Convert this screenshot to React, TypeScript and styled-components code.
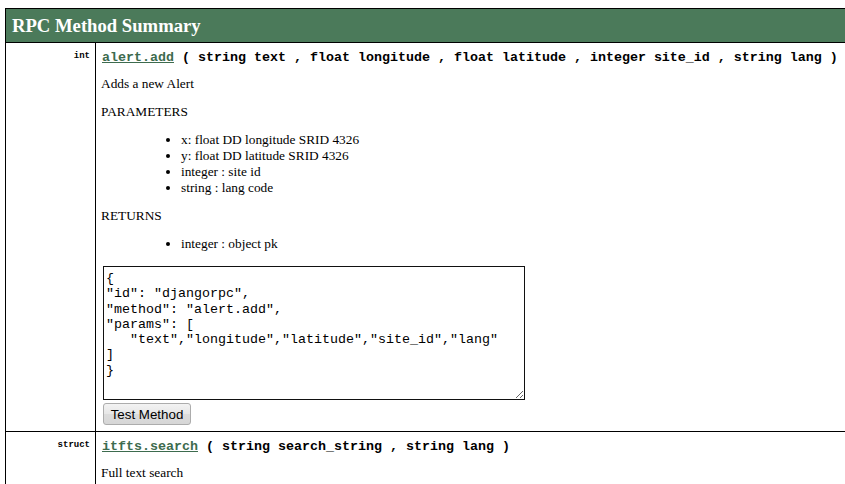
import React from "react";
import styled, { createGlobalStyle } from "styled-components";

const GlobalStyle = createGlobalStyle`
  html, body {
    margin: 0;
    padding: 0;
    overflow: hidden;
    background: #ffffff;
  }
  body {
    padding: 8px 0 0 5px;
    font-family: "Liberation Serif", "Times New Roman", serif;
    font-size: 13.33px;
    color: #000;
  }
`;

const Table = styled.div`
  width: 860px;
  border-top: 1px solid #000;
  border-left: 1px solid #000;
`;

const HeadingRow = styled.div`
  height: 33px;
  display: flex;
  align-items: center;
  padding-left: 6px;
  background: #4b7a5a;
  color: #ffffff;
  font-family: "Liberation Serif", "Times New Roman", serif;
  font-weight: bold;
  font-size: 18.67px;
  border-bottom: 1px solid #000;
`;

const MethodRow = styled.div`
  display: grid;
  grid-template-columns: 90px 1fr;
  border-bottom: 1px solid #000;
`;

const TypeCell = styled.div`
  border-right: 1px solid #000;
  padding: 7px 5px 0 0;
  text-align: right;
  font-family: "Liberation Mono", "Courier New", monospace;
  font-weight: bold;
  font-size: 9px;
  line-height: 12px;
`;

const DocCell = styled.div`
  padding: 7px 4px 6px 5px;
  display: flex;
  flex-direction: column;
  align-items: flex-start;
`;

const Signature = styled.div`
  font-family: "Liberation Mono", "Courier New", monospace;
  font-weight: bold;
  font-size: 13.33px;
  line-height: 16px;
  white-space: pre;
  margin-left: 1px;
`;

const MethodLink = styled.a`
  color: #3d6b4e;
  text-decoration: underline;
`;

const Para = styled.p<{ $top?: number }>`
  margin: ${(p) => p.$top ?? 12}px 0 0 0;
  line-height: 16px;
`;

const List = styled.ul`
  margin: 12px 0 0 0;
  padding-left: 80px;
  line-height: 16px;
  list-style: disc;
`;

const CallBox = styled.textarea`
  margin: 14px 0 0 2px;
  box-sizing: border-box;
  width: 422px;
  height: 134px;
  border: 1px solid #111;
  padding: 4px 2px;
  font-family: "Liberation Mono", "Courier New", monospace;
  font-size: 13.33px;
  line-height: 15.3px;
  color: #000;
  background: #fff;
  overflow: hidden;
`;

const TestButton = styled.button`
  margin: 3px 0 0 2px;
  box-sizing: border-box;
  width: 88px;
  height: 22px;
  padding: 0;
  border: 1px solid #acacac;
  border-radius: 3px;
  background: linear-gradient(#f3f3f3, #e6e6e6 50%, #dcdcdc 51%, #d6d6d6);
  font-family: "Liberation Sans", Arial, sans-serif;
  font-size: 13.33px;
  color: #000;
`;

type Param = { type: string; name: string };
type Method = {
  ret: string;
  name: string;
  params: Param[];
  doc: string;
  paramDocs: string[];
  returns: string[];
};

const methods: Method[] = [
  {
    ret: "int",
    name: "alert.add",
    params: [
      { type: "string", name: "text" },
      { type: "float", name: "longitude" },
      { type: "float", name: "latitude" },
      { type: "integer", name: "site_id" },
      { type: "string", name: "lang" },
    ],
    doc: "Adds a new Alert",
    paramDocs: [
      "x: float DD longitude SRID 4326",
      "y: float DD latitude SRID 4326",
      "integer : site id",
      "string : lang code",
    ],
    returns: ["integer : object pk"],
  },
  {
    ret: "struct",
    name: "itfts.search",
    params: [
      { type: "string", name: "search_string" },
      { type: "string", name: "lang" },
    ],
    doc: "Full text search",
    paramDocs: ["string : search string", "string : lang code"],
    returns: ["struct : results"],
  },
];

function callTemplate(m: Method): string {
  const args = m.params.map((p) => `"${p.name}"`).join(",");
  return `{\n"id": "djangorpc",\n"method": "${m.name}",\n"params": [\n   ${args}\n]\n}`;
}

function MethodEntry({ m }: { m: Method }) {
  const sig = " ( " + m.params.map((p) => `${p.type} ${p.name}`).join(" , ") + " )";
  return (
    <MethodRow>
      <TypeCell>{m.ret}</TypeCell>
      <DocCell>
        <Signature>
          <MethodLink href="#">{m.name}</MethodLink>
          {sig}
        </Signature>
        <Para $top={10}>{m.doc}</Para>
        <Para>PARAMETERS</Para>
        <List>
          {m.paramDocs.map((d) => (
            <li key={d}>{d}</li>
          ))}
        </List>
        <Para>RETURNS</Para>
        <List>
          {m.returns.map((d) => (
            <li key={d}>{d}</li>
          ))}
        </List>
        <CallBox defaultValue={callTemplate(m)} spellCheck={false} />
        <TestButton type="button">Test Method</TestButton>
      </DocCell>
    </MethodRow>
  );
}

export default function App() {
  return (
    <>
      <GlobalStyle />
      <Table>
        <HeadingRow>RPC Method Summary</HeadingRow>
        {methods.map((m) => (
          <MethodEntry key={m.name} m={m} />
        ))}
      </Table>
    </>
  );
}
